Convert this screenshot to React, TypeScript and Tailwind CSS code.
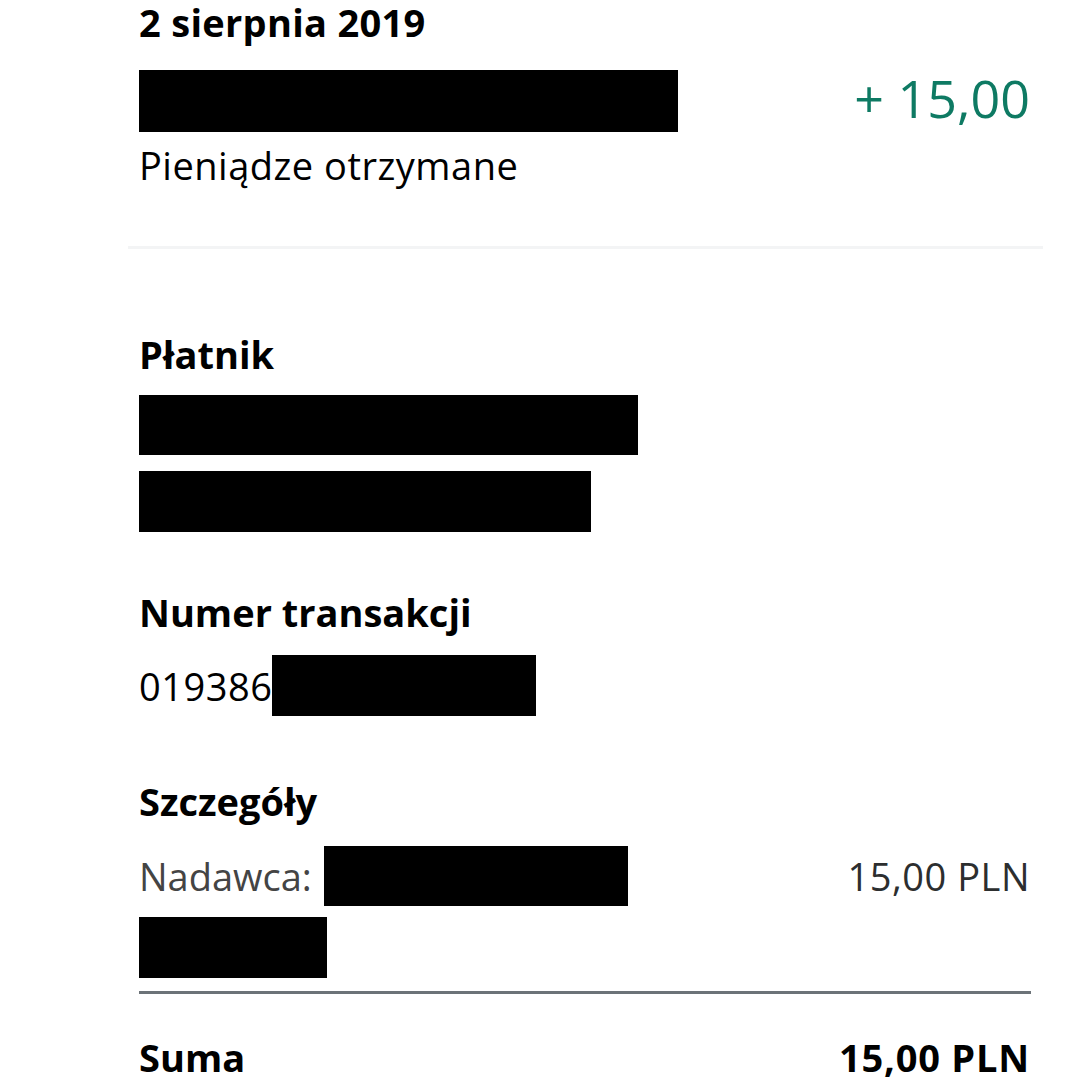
const Redacted = ({ w, h = 61 }: { w: number; h?: number }) => (
  <span
    className="inline-block bg-black align-middle shrink-0"
    style={{ width: w, height: h }}
  />
);

export default function App() {
  return (
    <div
      className="w-[1080px] h-[1081px] overflow-hidden bg-white text-black"
      style={{ fontFamily: '"Open Sans", "Liberation Sans", sans-serif' }}
    >
      {/* Nagłówek transakcji */}
      <div className="pl-[139px] pr-[50px]">
        <h1 className="text-[38px] leading-[44px] font-bold tracking-[0.3px]">
          2 sierpnia 2019
        </h1>
        <div className="flex items-start justify-between mt-[26px]">
          <div className="flex flex-col">
            <Redacted w={539} h={62} />
            <p className="text-[38px] leading-[44px] mt-[11px] tracking-[0.5px]">
              Pieniądze otrzymane
            </p>
          </div>
          <p className="text-[52px] leading-[56px] text-[#0e7a63]">+ 15,00</p>
        </div>
      </div>

      <div className="ml-[128px] mr-[37px] mt-[59px] h-[3px] bg-[#f3f4f5]" />

      <div className="pl-[139px] pr-[50px] pt-[83px]">
        {/* Płatnik */}
        <h2 className="text-[38px] leading-[44px] font-bold">Płatnik</h2>
        <div className="flex flex-col gap-[16px] mt-[19px]">
          <Redacted w={499} h={60} />
          <Redacted w={452} h={61} />
        </div>

        {/* Numer transakcji */}
        <h2 className="text-[38px] leading-[44px] font-bold mt-[58px]">
          Numer transakcji
        </h2>
        <div className="flex items-center mt-[21px]">
          <span className="text-[38px] leading-[44px] tracking-[0.5px]">019386</span>
          <Redacted w={264} h={61} />
        </div>

        {/* Szczegóły */}
        <h2 className="text-[38px] leading-[44px] font-bold mt-[63px]">
          Szczegóły
        </h2>
        <div className="flex items-center justify-between mt-[23px]">
          <div className="flex items-center gap-[12px]">
            <span className="text-[38px] leading-[44px] text-[#444]">
              Nadawca:
            </span>
            <Redacted w={304} h={60} />
          </div>
          <span className="text-[38px] leading-[44px] text-[#2c2e2f] tracking-[0.5px]">
            15,00 PLN
          </span>
        </div>
        <div className="mt-[11px] flex">
          <Redacted w={188} h={61} />
        </div>
        <div className="mt-[13px] h-[3px] bg-[#6c7378] mr-[-1px]" />
        <div className="flex items-center justify-between mt-[41px]">
          <span className="text-[38px] leading-[44px] font-bold">Suma</span>
          <span className="text-[38px] leading-[44px] font-bold tracking-[0.8px]">
            15,00 PLN
          </span>
        </div>
      </div>
    </div>
  );
}
